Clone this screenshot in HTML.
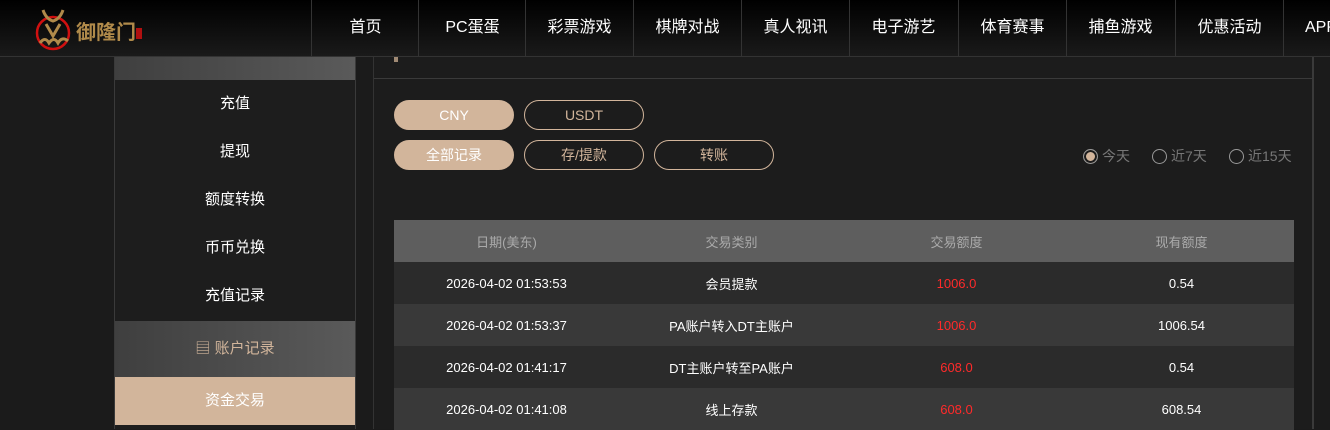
<!DOCTYPE html>
<html><head><meta charset="utf-8"><style>
*{margin:0;padding:0;box-sizing:border-box}
body{width:1330px;height:429px;overflow:hidden;background:#1b1b1b;font-family:"Liberation Sans","Noto Sans CJK SC",sans-serif;position:relative}
.hdr{position:absolute;left:0;top:0;width:1330px;height:57px;background:linear-gradient(#000,#1a1a1a);border-bottom:1px solid #333}
.nav{position:absolute;top:0;height:57px;width:108px;border-left:1px solid #333;color:#fff;font-size:16px;text-align:center;line-height:56px}
.side{position:absolute;left:114px;top:57px;width:242px;height:372px;background:#1d1d1d;border-left:1px solid #3a3a3a;border-right:1px solid #3a3a3a}
.side .it{height:48px;line-height:48px;text-align:center;color:#fff;font-size:15px}
.content{position:absolute;left:373px;top:57px;width:941px;height:372px;border-left:1px solid #333;border-right:2px solid #3a3a3a;background:#1c1c1c}
.btn{position:absolute;width:120px;height:30px;border-radius:15px;border:1px solid #d2b59b;color:#d2b59b;font-size:14px;text-align:center;line-height:28px}
.btn.on{background:#d2b59b;color:#fff}
table{position:absolute;left:394px;top:220px;width:900px;border-collapse:collapse;font-size:13px}
td,th{width:225px;height:42px;text-align:center;font-weight:normal}
th{background:#5e5e5e;color:#aaa}
tr.a td{background:#2b2b2b;color:#fff}
tr.b td{background:#393939;color:#fff}
.r{color:#ff2a2a!important}
.rad{position:absolute;top:146px;font-size:14px;color:#777}
.rad i{display:inline-block;width:15px;height:15px;border:1px solid #999;border-radius:50%;vertical-align:-3px;margin-right:4px}
</style></head><body>
<div class="hdr">
<svg style="position:absolute;left:34px;top:6px" width="110" height="46" viewBox="0 0 110 46">
<circle cx="19" cy="27" r="16" fill="none" stroke="#d01010" stroke-width="2.5"/>
<path d="M9 4 Q12 13 19 15 Q26 13 29 4 M12 18 L19 30 L26 18 M6 37 Q11 30 15 37 Q20 30 24 37 Q28 30 34 35" fill="none" stroke="#b08a4a" stroke-width="3"/>
<text x="42" y="33" fill="#b08a4a" font-size="20" font-family="Noto Sans CJK SC,sans-serif" font-weight="bold">御隆门</text>
<rect x="102" y="22" width="6" height="11" fill="#b01010"/>
</svg>
</div>
<div class="nav" style="left:311px">首页</div>
<div class="nav" style="left:418px">PC蛋蛋</div>
<div class="nav" style="left:525px">彩票游戏</div>
<div class="nav" style="left:633px">棋牌对战</div>
<div class="nav" style="left:741px">真人视讯</div>
<div class="nav" style="left:849px">电子游艺</div>
<div class="nav" style="left:958px">体育赛事</div>
<div class="nav" style="left:1066px">捕鱼游戏</div>
<div class="nav" style="left:1175px">优惠活动</div>
<div class="nav" style="left:1283px;text-align:left;padding-left:21px">APP</div>

<div class="side">
<div style="height:23px;background:linear-gradient(90deg,#3f3f3f,#5a5a5a)"></div>
<div class="it">充值</div><div class="it">提现</div><div class="it">额度转换</div><div class="it">币币兑换</div><div class="it">充值记录</div>
<div style="height:56px;line-height:56px;text-align:center;color:#d2b59b;font-size:15px;background:linear-gradient(90deg,#3f3f3f,#5a5a5a);margin-top:1px">▤ 账户记录</div>
<div class="it" style="background:#d2b59b">资金交易</div>
</div>

<div class="content">
<div style="position:absolute;left:20px;top:0;width:4px;height:5px;background:#a08a74"></div>
<div style="position:absolute;left:0;top:21px;width:939px;height:1px;background:#3a3a3a"></div>
</div>
<div class="btn on" style="left:394px;top:100px">CNY</div>
<div class="btn" style="left:524px;top:100px">USDT</div>
<div class="btn on" style="left:394px;top:140px">全部记录</div>
<div class="btn" style="left:524px;top:140px">存/提款</div>
<div class="btn" style="left:654px;top:140px">转账</div>
<div class="rad" style="left:1083px"><i style="background:#d2b59b;box-shadow:inset 0 0 0 2px #1c1c1c"></i>今天</div>
<div class="rad" style="left:1152px"><i></i>近7天</div>
<div class="rad" style="left:1229px"><i></i>近15天</div>

<table>
<tr><th>日期(美东)</th><th>交易类别</th><th>交易额度</th><th>现有额度</th></tr>
<tr class="a"><td>2026-04-02 01:53:53</td><td>会员提款</td><td class="r">1006.0</td><td>0.54</td></tr>
<tr class="b"><td>2026-04-02 01:53:37</td><td>PA账户转入DT主账户</td><td class="r">1006.0</td><td>1006.54</td></tr>
<tr class="a"><td>2026-04-02 01:41:17</td><td>DT主账户转至PA账户</td><td class="r">608.0</td><td>0.54</td></tr>
<tr class="b"><td>2026-04-02 01:41:08</td><td>线上存款</td><td class="r">608.0</td><td>608.54</td></tr>
</table>
</body></html>
